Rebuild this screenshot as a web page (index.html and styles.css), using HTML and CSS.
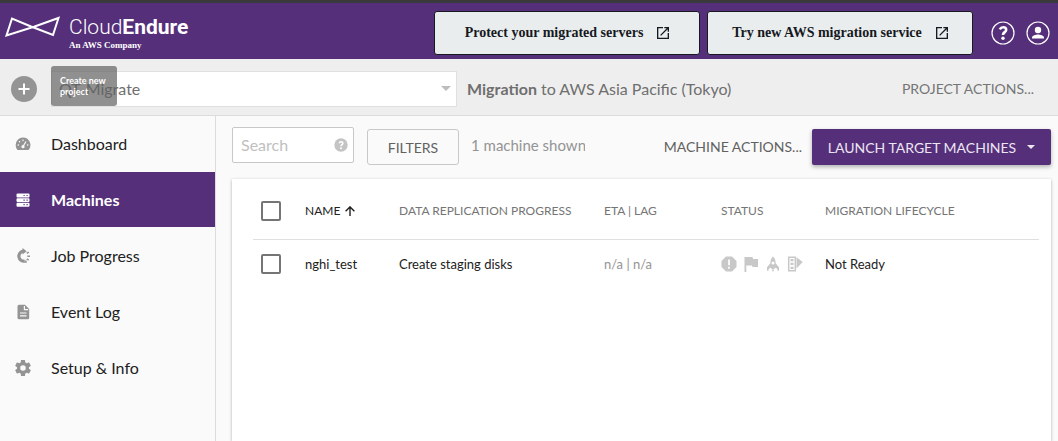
FILE: index.html
```html
<!DOCTYPE html>
<html lang="en">
<head>
<meta charset="utf-8">
<title>CloudEndure - Machines</title>
<link rel="stylesheet" href="styles.css">
</head>
<body>
<header class="topbar">
  <a class="brand" href="#">
    <svg class="brand-mark" width="58" height="24" viewBox="0 0 58 24" fill="none" stroke="#fff" stroke-width="2" stroke-linejoin="miter"><path d="M8 3.500 2.500 20.500 30 11.800 54.500 3 49 20 27 11.500Z"/></svg>
    <span class="brand-text">
      <span class="brand-name">Cloud<b>Endure</b></span>
      <span class="brand-sub">An AWS Company</span>
    </span>
  </a>
  <nav class="top-actions">
    <a class="promo" href="#">Protect your migrated servers
      <svg width="12" height="12" viewBox="3 3 18 18"><path fill="currentColor" d="M19 19H5V5h7V3H3v18h18v-9h-2v7zM14 3v2h3.590l-9.830 9.830 1.410 1.410L19 6.410V10h2V3h-7z"/></svg>
    </a>
    <a class="promo" href="#">Try new AWS migration service
      <svg width="12" height="12" viewBox="3 3 18 18"><path fill="currentColor" d="M19 19H5V5h7V3H3v18h18v-9h-2v7zM14 3v2h3.590l-9.830 9.830 1.410 1.410L19 6.410V10h2V3h-7z"/></svg>
    </a>
    <button class="round help" type="button" aria-label="Help">
      <svg width="24" height="24" viewBox="0 0 24 24"><circle cx="12" cy="12" r="11" fill="none" stroke="#fff" stroke-width="1.200"/><path d="M8.800 8.300C9.800 6.600 11 6.200 12.200 6.200c2 0 3 1.100 3 2.500 0 2.500-3.200 2.400-3.200 5.300" fill="none" stroke="#fff" stroke-width="2.600"/><circle cx="12" cy="17.300" r="1.700" fill="#fff"/></svg>
    </button>
    <button class="round" type="button" aria-label="Account">
      <svg width="24" height="24" viewBox="0 0 24 24"><circle cx="12" cy="12" r="11" fill="none" stroke="#fff" stroke-width="1.200"/><circle cx="12" cy="9" r="3.200" fill="#fff"/><path fill="#fff" d="M6 17.500v-1c0-2 4-3 6-3s6 1 6 3v1z"/></svg>
    </button>
  </nav>
</header>

<section class="projectbar">
  <div class="add-wrap">
    <button class="add" type="button" aria-label="Create new project">
      <svg width="26" height="26" viewBox="0 0 26 26"><path d="M13 7.500v11M7.500 13h11" stroke="#fff" stroke-width="2"/></svg>
    </button>
    <span class="tooltip" role="tooltip">Create new project</span>
  </div>
  <div class="select-wrap">
    <select class="project" aria-label="Project"><option>QT-Migrate</option></select>
    <svg class="caret" width="10" height="5" viewBox="0 0 10 5"><path d="M0 0h10L5 5z" fill="#bdbdbd"/></svg>
  </div>
  <p class="migration"><b>Migration</b> to AWS Asia Pacific (Tokyo)</p>
  <button class="text-btn" type="button">PROJECT ACTIONS...</button>
</section>

<div class="layout">
  <nav class="sidebar">
    <a href="#"><svg width="16" height="16" viewBox="0 0 16 16"><path fill="currentColor" d="M8 1.500A7.300 7.300 0 0 0 .7 9c0 1.800.6 3.400 1.600 4.700.2.300.5.300.8.300h9.800c.3 0 .6 0 .8-.3A7.500 7.500 0 0 0 8 1.500z"/><path d="m8 10.500 3-5" stroke="#fafafa" stroke-width="1.200"/><circle cx="8" cy="10.700" r="1.600" fill="#fafafa"/><g fill="#fafafa"><circle cx="3.300" cy="9" r=".8"/><circle cx="4.600" cy="5.800" r=".8"/><circle cx="8" cy="4.200" r=".8"/><circle cx="12.700" cy="9" r=".8"/></g></svg>Dashboard</a>
    <a class="active" href="#" aria-current="page"><svg width="16" height="16" viewBox="0 0 16 16"><path fill="currentColor" d="M2.500 1.500h11q1 0 1 1v2q0 1-1 1h-11q-1 0-1-1v-2q0-1 1-1zM2.500 6.200h11q1 0 1 1v1.800q0 1-1 1h-11q-1 0-1-1V7.200q0-1 1-1zM2.500 10.700h11q1 0 1 1v2q0 1-1 1h-11q-1 0-1-1v-2q0-1 1-1z"/><path d="M8.500 3.500h1.200M11.500 3.500h1.200M8.500 8.100h1.200M11.500 8.100h1.200M8.500 12.700h1.200M11.500 12.700h1.200" stroke="#552f7a" stroke-width="1.200"/></svg>Machines</a>
    <a href="#"><svg width="16" height="16" viewBox="0 0 16 16" fill="none" stroke="currentColor"><path d="M8.500 3.200A5 5 0 1 0 9.800 13.100" stroke-width="3.200"/><path fill="currentColor" stroke="none" d="M7.500 0 11.700 3.200 7.500 6.500z"/><path d="m11.800 5.300 2-1.200M12.300 8.200h2.700M11.700 10.900l2 1.300M10.500 12.500l.7 2.300" stroke-width="1.600"/></svg>Job Progress</a>
    <a href="#"><svg width="16" height="16" viewBox="0 0 16 16"><path fill="currentColor" d="M4 .8h6L14.200 5v8.700q0 1.500-1.500 1.500H4q-1.500 0-1.500-1.500V2.300Q2.500.8 4 .8z"/><path d="M9.400 2v3.700h3.800M5 9h6.500M5 11.900h6.500" fill="none" stroke="#fafafa" stroke-width="1.200"/></svg>Event Log</a>
    <a href="#"><svg width="16" height="16" viewBox="2 2 20 20"><path fill="currentColor" d="M19.430 12.980c.04-.32.07-.64.07-.98s-.03-.66-.07-.98l2.110-1.650c.19-.15.24-.42.12-.64l-2-3.460c-.12-.22-.39-.3-.61-.22l-2.490 1c-.52-.4-1.080-.73-1.690-.98l-.38-2.650A.49.49 0 0 0 14 2h-4c-.25 0-.46.18-.49.42l-.38 2.650c-.61.25-1.170.59-1.690.98l-2.490-1c-.23-.09-.49 0-.61.22l-2 3.460c-.13.22-.07.49.12.64l2.110 1.650c-.04.32-.07.65-.07.98s.03.66.07.98l-2.110 1.650c-.19.15-.24.42-.12.640l2 3.460c.12.22.39.3.61.22l2.490-1c.52.4 1.080.73 1.690.98l.38 2.650c.03.24.24.42.49.42h4c.25 0 .46-.18.49-.42l.38-2.650c.61-.25 1.170-.59 1.690-.98l2.490 1c.23.09.49 0 .61-.22l2-3.460c.12-.22.07-.49-.12-.64l-2.110-1.650zM12 15.500a3.500 3.500 0 1 1 0-7 3.500 3.500 0 0 1 0 7z"/></svg>Setup &amp; Info</a>
  </nav>

  <main class="content">
    <div class="toolbar">
      <div class="search">
        <input type="text" placeholder="Search" aria-label="Search machines">
        <svg width="14" height="14" viewBox="0 0 14 14"><circle cx="7" cy="7" r="6.700" fill="#c4c4c4"/><path d="M5.200 5.200c.4-1 1-1.400 1.900-1.400 1.100 0 1.800.6 1.800 1.500 0 1.300-1.900 1.300-1.900 2.900" fill="none" stroke="#fff" stroke-width="1.500"/><circle cx="7" cy="10.300" r="1" fill="#fff"/></svg>
      </div>
      <button class="filters" type="button">FILTERS</button>
      <span class="count">1 machine shown</span>
      <button class="text-btn" type="button">MACHINE ACTIONS...</button>
      <button class="launch" type="button">LAUNCH TARGET MACHINES
        <svg width="8" height="4" viewBox="0 0 8 4"><path d="M0 0h8L4 4z" fill="currentColor"/></svg>
      </button>
    </div>

    <div class="card">
      <table class="machines">
        <colgroup><col class="c-check"><col class="c-name"><col class="c-progress"><col class="c-lag"><col class="c-status"><col></colgroup>
        <thead>
          <tr>
            <th><input type="checkbox" aria-label="Select all machines"></th>
            <th class="sorted" aria-sort="ascending">NAME <svg width="10" height="10" viewBox="0 0 10 10" fill="none" stroke="currentColor" stroke-width="1.400"><path d="M5 10V1M.6 5.300 5 .9l4.400 4.400"/></svg></th>
            <th>DATA REPLICATION PROGRESS</th>
            <th>ETA | LAG</th>
            <th>STATUS</th>
            <th>MIGRATION LIFECYCLE</th>
          </tr>
        </thead>
        <tbody>
          <tr>
            <td><input type="checkbox" aria-label="Select nghi_test"></td>
            <td>nghi_test</td>
            <td>Create staging disks</td>
            <td class="muted">n/a | n/a</td>
            <td>
              <div class="status">
                <svg width="16" height="16" viewBox="0 0 16 16"><path fill="currentColor" d="M5 .5h6L15.500 5v6L11 15.500H5L.5 11V5z"/><path d="M8 3.500v5.700M8 10.700v2" stroke="#fff" stroke-width="1.700"/></svg>
                <svg width="16" height="16" viewBox="0 0 16 16"><path fill="currentColor" d="M1.500 1h8l.5 2h5v8h-5.500L9 9.500H3.300V16H1.500z"/></svg>
                <svg width="16" height="16" viewBox="0 0 16 16"><path fill="currentColor" fill-rule="evenodd" d="M8 .5c2 2 2.800 4.200 2.600 6.700l3.400 4v3.600h-1.300l-.7-2.300-2-.8-.5 1.300h-3L6 11.700l-2 .8-.7 2.300H2v-3.600l3.400-4C5.200 4.700 6 2.500 8 .5zM8 5.500a1.500 1.500 0 1 0 0 3 1.500 1.500 0 0 0 0-3zM6.700 13.600h2.600L8 16z"/></svg>
                <svg width="16" height="16" viewBox="0 0 16 16"><path fill="none" stroke="currentColor" stroke-width="1.500" d="M1.700 1.200h6.600v13.600H1.700z"/><path fill="currentColor" d="M9.500 1.200 15.700 6 9.500 12.500zM3.500 3h3v2.200h-3zM3.500 6.800h3V9h-3zM3.500 10.800h3V13h-3z"/></svg>
              </div>
            </td>
            <td>Not Ready</td>
          </tr>
        </tbody>
      </table>
    </div>
  </main>
</div>
</body>
</html>
```
FILE: styles.css
```css
* { box-sizing: border-box; }
body {
  margin: 0;
  min-height: 100vh;
  display: flex;
  flex-direction: column;
  overflow: hidden;
  font-family: Lato, sans-serif;
  font-size: 13px;
  color: #212121;
  background: #fafafa;
}
button { font: inherit; cursor: pointer; }
a { text-decoration: none; color: inherit; }
svg { flex: none; }

.topbar {
  display: flex;
  justify-content: space-between;
  align-items: center;
  height: 59px;
  padding: 3px 8px 0 4px;
  border-top: 3px solid #3a393c;
  background: #552f7a;
  color: #fff;
}
.brand { display: flex; align-items: flex-start; gap: 7px; }
.brand-text { display: flex; flex-direction: column; }
.brand-name { font: 300 21px/24px Roboto, sans-serif; }
.brand-name b { font-weight: 700; }
.brand-sub { font: bold 9px/12px "Liberation Serif", serif; }
.top-actions { display: flex; align-items: center; gap: 7px; }
.promo {
  display: flex;
  align-items: center;
  justify-content: center;
  gap: 14px;
  width: 266px;
  height: 44px;
  border: 1px solid #16191f;
  border-radius: 3px;
  background: #eaeded;
  color: #16191f;
  font: bold 14px/20px "Liberation Serif", serif;
}
.round { display: flex; padding: 0; border: 0; background: none; }
.help { margin: 0 4px 0 11px; }

.projectbar {
  display: flex;
  align-items: center;
  height: 57px;
  padding: 3px 24px 0 11px;
  border-bottom: 1px solid #dcdcdc;
  background: #eee;
  color: #6f6f6f;
  font-size: 16px;
}
.add-wrap { position: relative; margin-right: 14px; }
.add {
  display: flex;
  padding: 0;
  border: 0;
  border-radius: 50%;
  background: #949494;
}
.tooltip {
  position: absolute;
  z-index: 1;
  left: 40px;
  top: -10px;
  width: 66px;
  padding: 9px;
  border-radius: 3px;
  background: rgba(97, 97, 97, .7);
  color: #fff;
  font-size: 9px;
  font-weight: 700;
  line-height: 11px;
}
.select-wrap { display: flex; align-items: center; position: relative; flex: 0 1 406px; }
.project {
  appearance: none;
  width: 100%;
  height: 36px;
  padding: 0 24px 0 7px;
  border: 1px solid #e0e0e0;
  border-radius: 0;
  background: #fff;
  color: #6f6f6f;
  font: 16px Lato, sans-serif;
}
.caret { position: absolute; right: 6px; }
.migration { margin: 0 auto 0 10px; white-space: nowrap; }
.text-btn {
  padding: 0;
  border: 0;
  background: none;
  color: #616161;
  font-size: 14px;
  white-space: nowrap;
}
.projectbar .text-btn { color: #757575; }

.layout { display: flex; flex: 1; }
.sidebar {
  flex: none;
  width: 216px;
  border-right: 1px solid #dcdcdc;
  font-size: 16px;
}
.sidebar a {
  display: flex;
  align-items: center;
  gap: 20px;
  height: 55px;
  margin-bottom: 1px;
  padding: 0 0 1px 15px;
}
.sidebar svg { margin-top: 2px; color: #949494; }
.sidebar .active { background: #552f7a; color: #fff; font-weight: 700; }
.sidebar .active svg { color: #fff; }

.content {
  flex: 1;
  min-width: 0;
  display: flex;
  flex-direction: column;
  gap: 14px;
  padding: 11px 7px 0 16px;
}
.toolbar { display: flex; align-items: center; height: 38px; }
.search {
  display: flex;
  align-items: center;
  align-self: flex-start;
  width: 122px;
  height: 36px;
  padding: 0 5px 0 8px;
  border: 1px solid #c8c8c8;
  border-radius: 2px;
  background: #fff;
}
.search input {
  flex: 1;
  min-width: 0;
  padding: 0 0 2px;
  border: 0;
  outline: 0;
  font: 16px Lato, sans-serif;
}
.search input::placeholder { color: #c0c0c0; }
.filters {
  align-self: flex-end;
  width: 92px;
  height: 36px;
  margin: 0 12px 0 13px;
  border: 1px solid #c8c8c8;
  border-radius: 3px;
  background: #fafafa;
  color: #616161;
  font-size: 14px;
}
.count {
  width: 114px;
  margin-right: auto;
  padding-bottom: 2px;
  overflow: hidden;
  white-space: nowrap;
  color: #949494;
  font-size: 15px;
}
.launch {
  display: flex;
  align-items: center;
  justify-content: center;
  align-self: flex-end;
  gap: 11px;
  width: 239px;
  height: 36px;
  margin-left: 10px;
  padding: 0;
  border: 0;
  border-radius: 2px;
  background: #552f7a;
  color: #ece6f2;
  font-size: 14px;
  box-shadow: 0 2px 4px rgba(0, 0, 0, .3);
}

.card {
  flex: 1;
  padding: 4px 12px 0 21px;
  background: #fff;
  box-shadow: 0 1px 3px rgba(0, 0, 0, .3);
}
.machines { width: 100%; table-layout: fixed; border-collapse: collapse; }
.c-check { width: 52px; }
.c-name { width: 94px; }
.c-progress { width: 205px; }
.c-lag { width: 117px; }
.c-status { width: 104px; }
th, td { padding: 0; text-align: left; vertical-align: middle; white-space: nowrap; }
th {
  height: 56px;
  border-bottom: 1px solid #e0e0e0;
  color: #757575;
  font-size: 12px;
  font-weight: 400;
}
td { height: 50px; }
.sorted { color: #212121; }
.sorted svg { margin-left: 2px; vertical-align: -1px; }
.muted { color: #949494; }
.machines input {
  display: block;
  appearance: none;
  width: 20px;
  height: 20px;
  margin: 0 0 0 8px;
  border: 2px solid #757575;
  border-radius: 2px;
  background: #fff;
}
.status { display: flex; gap: 6px; color: #c8c8c8; }
```
